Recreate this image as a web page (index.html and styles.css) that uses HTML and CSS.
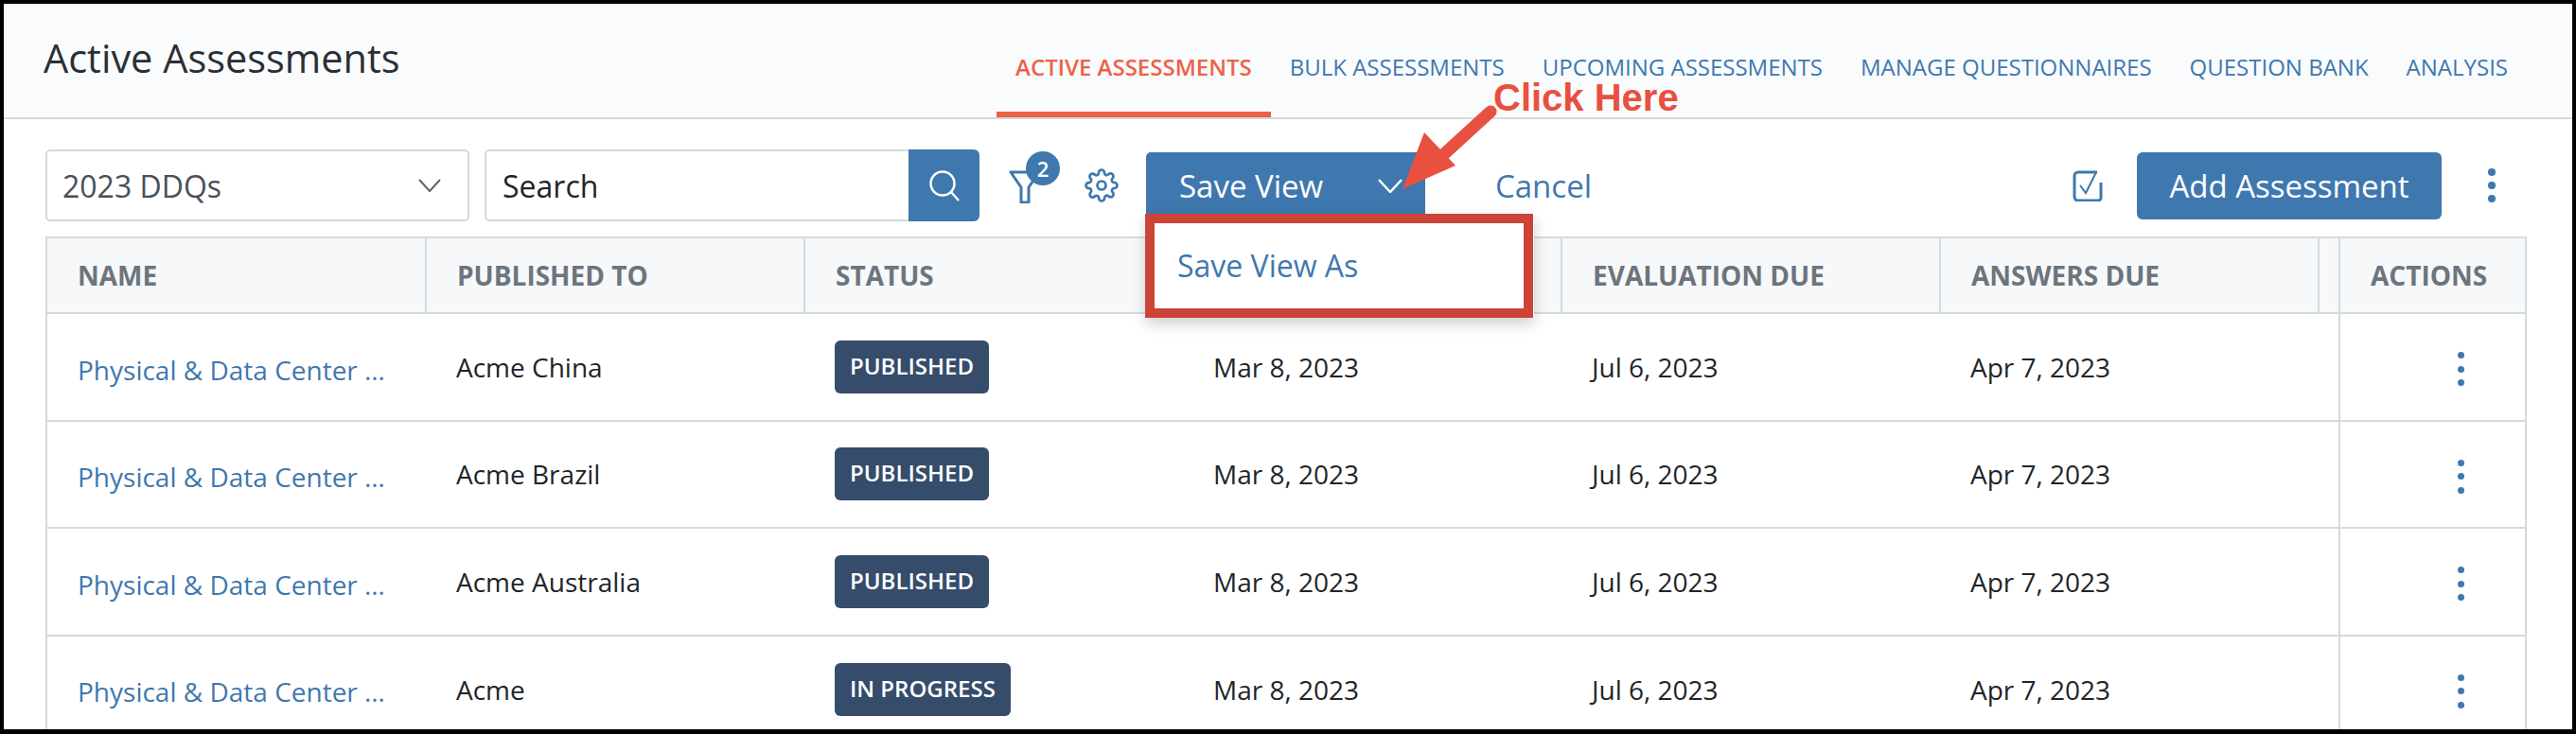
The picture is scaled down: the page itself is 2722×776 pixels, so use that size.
FILE: index.html
```html
<!DOCTYPE html>
<html lang="en">
<head>
    <meta charset="UTF-8">
    <title>Active Assessments</title>
    <link rel="stylesheet" href="styles.css">
</head>
<body>
<div class="frame">
    <header class="page-header">
        <h1 class="page-title">Active Assessments</h1>
        <nav class="tabs">
            <a class="tab active">ACTIVE ASSESSMENTS</a>
            <a class="tab">BULK ASSESSMENTS</a>
            <a class="tab">UPCOMING ASSESSMENTS</a>
            <a class="tab">MANAGE QUESTIONNAIRES</a>
            <a class="tab">QUESTION BANK</a>
            <a class="tab">ANALYSIS</a>
        </nav>
    </header>

    <div class="toolbar">
        <div class="view-select">
            <span>2023 DDQs</span>
            <svg class="select-chevron" viewBox="0 0 24 14"><path d="M1 1l11 12L23 1"/></svg>
        </div>
        <div class="search-group">
            <div class="search-input">Search</div>
            <button class="search-button">
                <svg viewBox="0 0 32 33"><circle cx="14" cy="14" r="12.5"/><path d="M23 23l8 9"/></svg>
            </button>
        </div>
        <div class="filter-icon">
            <svg viewBox="0 0 34 35"><path d="M2 2h30L21 18v16h-8V18z"/></svg>
            <span class="filter-badge">2</span>
        </div>
        <svg class="gear-icon" viewBox="0 0 24 24"><circle cx="12" cy="12" r="3"/><path d="M19.4 15a1.65 1.65 0 0 0 .33 1.82l.06.06a2 2 0 0 1 0 2.83 2 2 0 0 1-2.83 0l-.06-.06a1.65 1.65 0 0 0-1.82-.33 1.65 1.65 0 0 0-1 1.51V21a2 2 0 0 1-2 2 2 2 0 0 1-2-2v-.09A1.65 1.65 0 0 0 9 19.4a1.65 1.65 0 0 0-1.82.33l-.06.06a2 2 0 0 1-2.83 0 2 2 0 0 1 0-2.83l.06-.06a1.65 1.65 0 0 0 .33-1.82 1.65 1.65 0 0 0-1.51-1H3a2 2 0 0 1-2-2 2 2 0 0 1 2-2h.09A1.65 1.65 0 0 0 4.6 9a1.65 1.65 0 0 0-.33-1.82l-.06-.06a2 2 0 0 1 0-2.83 2 2 0 0 1 2.83 0l.06.06a1.65 1.65 0 0 0 1.82.33H9a1.65 1.65 0 0 0 1-1.51V3a2 2 0 0 1 2-2 2 2 0 0 1 2 2v.09a1.65 1.65 0 0 0 1 1.51 1.65 1.65 0 0 0 1.82-.33l.06-.06a2 2 0 0 1 2.83 0 2 2 0 0 1 0 2.83l-.06.06a1.65 1.65 0 0 0-.33 1.82V9a1.65 1.65 0 0 0 1.51 1H21a2 2 0 0 1 2 2 2 2 0 0 1-2 2h-.09a1.65 1.65 0 0 0-1.51 1z"/></svg>
        <div class="save-view">
            <button class="save-view-button">
                <span>Save View</span>
                <svg viewBox="0 0 26 15"><path d="M1 1l12 13L25 1"/></svg>
            </button>
            <div class="save-view-menu">Save View As</div>
        </div>
        <a class="cancel-link">Cancel</a>
        <svg class="check-icon" viewBox="0 0 32 33"><path d="M26 2H6a4 4 0 0 0-4 4v22a4 4 0 0 0 4 4h21a3 3 0 0 0 3-3V13"/><path d="M8 16l6 8L25 2" class="thin"/></svg>
        <button class="add-button">Add Assessment</button>
        <span class="kebab toolbar-kebab"><i></i><i></i><i></i></span>
    </div>

    <table class="assessments">
        <thead>
            <tr>
                <th class="col-name">NAME</th>
                <th class="col-std">PUBLISHED TO</th>
                <th class="col-std">STATUS</th>
                <th class="col-std"></th>
                <th class="col-std">EVALUATION DUE</th>
                <th class="col-std">ANSWERS DUE</th>
                <th class="col-gap"></th>
                <th class="col-actions">ACTIONS</th>
            </tr>
        </thead>
        <tbody>
            <tr>
                <td><a class="name-link">Physical &amp; Data Center …</a></td>
                <td>Acme China</td>
                <td><span class="badge">PUBLISHED</span></td>
                <td>Mar 8, 2023</td>
                <td>Jul 6, 2023</td>
                <td>Apr 7, 2023</td>
                <td class="gap-cell"></td>
                <td class="actions-cell"><span class="kebab"><i></i><i></i><i></i></span></td>
            </tr>
            <tr>
                <td><a class="name-link">Physical &amp; Data Center …</a></td>
                <td>Acme Brazil</td>
                <td><span class="badge">PUBLISHED</span></td>
                <td>Mar 8, 2023</td>
                <td>Jul 6, 2023</td>
                <td>Apr 7, 2023</td>
                <td class="gap-cell"></td>
                <td class="actions-cell"><span class="kebab"><i></i><i></i><i></i></span></td>
            </tr>
            <tr>
                <td><a class="name-link">Physical &amp; Data Center …</a></td>
                <td>Acme Australia</td>
                <td><span class="badge">PUBLISHED</span></td>
                <td>Mar 8, 2023</td>
                <td>Jul 6, 2023</td>
                <td>Apr 7, 2023</td>
                <td class="gap-cell"></td>
                <td class="actions-cell"><span class="kebab"><i></i><i></i><i></i></span></td>
            </tr>
            <tr>
                <td><a class="name-link">Physical &amp; Data Center …</a></td>
                <td>Acme</td>
                <td><span class="badge">IN PROGRESS</span></td>
                <td>Mar 8, 2023</td>
                <td>Jul 6, 2023</td>
                <td>Apr 7, 2023</td>
                <td class="gap-cell"></td>
                <td class="actions-cell"><span class="kebab"><i></i><i></i><i></i></span></td>
            </tr>
        </tbody>
    </table>

    <!-- annotation drawn over the screenshot -->
    <div class="callout-box"></div>
    <div class="callout-text">Click Here</div>
    <svg class="callout-arrow" viewBox="0 0 120 100">
        <path d="M94 8L35 62" class="arrow-line"/>
        <path d="M1 90L24 30L57 65z" class="arrow-head"/>
    </svg>
</div>
</body>
</html>
```

FILE: styles.css
```css
* {
    box-sizing: border-box;
}

html, body {
    margin: 0;
    padding: 0;
}

body {
    font-family: 'Open Sans', sans-serif;
    color: #212529;
    background-color: #000;
}

.frame {
    position: relative;
    width: 2714px;
    height: 767px;
    margin: 4px 4px 5px;
    background-color: #fff;
    overflow: hidden;
}

.page-header {
    display: flex;
    justify-content: space-between;
    align-items: flex-end;
    height: 122px;
    padding-right: 48px;
    background-color: #f9fbfd;
    border-bottom: 2px solid #d3dbdf;
}

.page-title {
    margin: 0;
    align-self: flex-start;
    padding: 32px 0 0 42px;
    font-size: 41.5px;
    line-height: 50px;
    font-weight: 500;
    color: #2b2f33;
}

.tabs {
    display: flex;
}

.tab {
    padding: 0 20px 32px;
    border-bottom: 6px solid transparent;
    font-size: 24px;
    line-height: 30px;
    color: #3f78ae;
}

.tab.active {
    color: #ef6146;
    font-weight: 600;
    border-bottom-color: #ef6146;
}

.toolbar {
    display: flex;
    align-items: center;
    height: 76px;
    margin: 32px 48px 16px 44px;
}

.view-select {
    display: flex;
    justify-content: space-between;
    align-items: center;
    width: 448px;
    height: 76px;
    padding: 0 28px 0 16px;
    border: 2px solid #d3dbdf;
    border-radius: 5px;
    font-size: 32px;
    color: #495057;
}

.select-chevron {
    width: 24px;
    height: 14px;
    fill: none;
    stroke: #5a6470;
    stroke-width: 2;
}

.search-group {
    display: flex;
    margin-left: 16px;
}

.search-input {
    display: flex;
    align-items: center;
    width: 448px;
    height: 76px;
    padding-left: 17px;
    border: 2px solid #d3dbdf;
    border-right: none;
    border-radius: 5px 0 0 5px;
    font-size: 32px;
    color: #212529;
}

.search-button {
    display: flex;
    align-items: center;
    justify-content: center;
    width: 75px;
    height: 76px;
    padding: 0;
    border: none;
    border-radius: 0 6px 6px 0;
    background-color: #3f78ae;
}

.search-button svg {
    width: 32px;
    height: 33px;
    fill: none;
    stroke: #fff;
    stroke-width: 2.5;
}

.filter-icon {
    position: relative;
    width: 34px;
    height: 35px;
    margin-left: 31px;
    margin-top: 2px;
}

.filter-icon svg {
    display: block;
    width: 34px;
    height: 35px;
    fill: none;
    stroke: #3f78ae;
    stroke-width: 3;
    stroke-linejoin: round;
}

.filter-badge {
    position: absolute;
    top: -20px;
    left: 18px;
    width: 36px;
    height: 36px;
    border-radius: 50%;
    background-color: #3f78ae;
    color: #fff;
    font-size: 22px;
    font-weight: 600;
    line-height: 36px;
    text-align: center;
}

.gear-icon {
    width: 36px;
    height: 36px;
    margin-left: 46px;
    fill: none;
    stroke: #3f78ae;
    stroke-width: 1.8;
}

.save-view {
    position: relative;
    margin-left: 29px;
}

.save-view-button {
    display: flex;
    justify-content: space-between;
    align-items: center;
    width: 295px;
    height: 71px;
    padding: 0 24px 0 35px;
    border: none;
    border-radius: 5px 5px 0 0;
    background-color: #3f78ae;
    color: #fff;
    font-family: inherit;
    font-size: 33px;
    font-weight: 500;
}

.save-view-button svg {
    width: 26px;
    height: 15px;
    fill: none;
    stroke: #fff;
    stroke-width: 2.5;
}

.save-view-menu {
    position: absolute;
    top: 65px;
    left: 0;
    z-index: 2;
    display: flex;
    align-items: center;
    width: 410px;
    height: 110px;
    padding-left: 33px;
    background-color: #fff;
    box-shadow: 0 6px 14px rgba(0, 0, 0, 0.2);
    color: #3f78ae;
    font-size: 32px;
}

.cancel-link {
    margin-left: 74px;
    color: #3f78ae;
    font-size: 33px;
    font-weight: 500;
}

.check-icon {
    width: 32px;
    height: 33px;
    margin-left: auto;
    fill: none;
    stroke: #3f78ae;
    stroke-width: 3;
}

.check-icon .thin {
    stroke-width: 2;
}

.add-button {
    width: 322px;
    height: 71px;
    margin-left: 36px;
    padding: 0;
    border: none;
    border-radius: 6px;
    background-color: #3f78ae;
    color: #fff;
    font-family: inherit;
    font-size: 33px;
    font-weight: 500;
}

.kebab {
    display: inline-flex;
    flex-direction: column;
    gap: 7.5px;
    vertical-align: middle;
}

.kebab i {
    display: block;
    width: 7px;
    height: 7px;
    border-radius: 50%;
    background-color: #3f78ae;
}

.toolbar-kebab {
    gap: 6px;
    margin-left: 49px;
    margin-right: 33px;
}

.toolbar-kebab i {
    width: 8px;
    height: 8px;
}

.assessments {
    width: 2622px;
    margin-left: 44px;
    border-collapse: collapse;
    table-layout: fixed;
}

.col-name {
    width: 401px;
}

.col-std {
    width: 400px;
}

.col-gap {
    width: 22px;
}

.assessments th {
    height: 80px;
    padding: 0 0 0 32px;
    border: 2px solid #d3dbdf;
    background-color: #f6f8fa;
    color: #6c757d;
    font-size: 28px;
    font-weight: 700;
    text-align: left;
}

.assessments th.col-gap {
    padding: 0;
}

.assessments td {
    height: 113.6px;
    padding: 0 0 0 32px;
    border-bottom: 2px solid #d3dbdf;
    font-size: 28px;
    white-space: nowrap;
}

.assessments td:first-child {
    border-left: 2px solid #d3dbdf;
}

.assessments td.gap-cell {
    padding: 0;
}

.assessments td.actions-cell {
    padding: 0 0 0 124px;
    border-left: 2px solid #d3dbdf;
    border-right: 2px solid #d3dbdf;
}

.name-link {
    display: inline-block;
    padding-top: 4px;
    vertical-align: middle;
    color: #3f78ae;
}

.badge {
    display: inline-block;
    height: 56px;
    padding: 0 16px;
    border-radius: 6px;
    background-color: #364c6b;
    color: #fff;
    font-size: 24px;
    font-weight: 600;
    line-height: 54px;
    vertical-align: middle;
}

.callout-box {
    position: absolute;
    top: 222px;
    left: 1206px;
    z-index: 3;
    width: 410px;
    height: 110px;
    border: 10px solid #cc4437;
}

.callout-text {
    position: absolute;
    top: 76px;
    left: 1574px;
    z-index: 3;
    font-family: 'Liberation Sans', Arial, sans-serif;
    font-size: 40px;
    font-weight: 700;
    line-height: 46px;
    color: #e8503f;
}

.callout-arrow {
    position: absolute;
    top: 106px;
    left: 1477px;
    z-index: 3;
    width: 120px;
    height: 100px;
}

.arrow-line {
    fill: none;
    stroke: #e8503f;
    stroke-width: 13;
    stroke-linecap: round;
}

.arrow-head {
    fill: #e8503f;
}
```
